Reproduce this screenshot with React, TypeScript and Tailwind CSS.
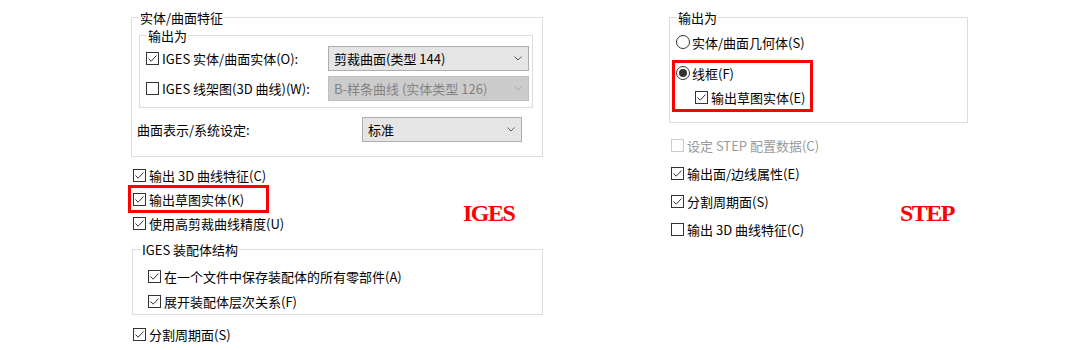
import React from "react";

function Box({ checked = false, disabled = false }: { checked?: boolean; disabled?: boolean }) {
  return (
    <span
      className={`w-[13px] h-[13px] border ${disabled ? "border-[#cccccc]" : "border-[#333333]"} bg-white flex items-center justify-center shrink-0`}
    >
      {checked && (
        <svg width="11" height="11" viewBox="0 0 11 11">
          <path d="M1.5 5.5 L4.2 8.2 L9.5 2.5" fill="none" stroke="#333333" strokeWidth="1" />
        </svg>
      )}
    </span>
  );
}

function Radio({ selected = false }: { selected?: boolean }) {
  return (
    <span className="w-[14px] h-[14px] rounded-full border border-[#333333] bg-white flex items-center justify-center shrink-0">
      {selected && <span className="w-[8px] h-[8px] rounded-full bg-[#333333]" />}
    </span>
  );
}

function Chevron({ color = "#606060" }: { color?: string }) {
  return (
    <svg width="8" height="5" viewBox="0 0 8 5">
      <path d="M0.5 0.5 L4 4 L7.5 0.5" fill="none" stroke={color} strokeWidth="1" />
    </svg>
  );
}

function Select({ text, disabled = false, width }: { text: string; disabled?: boolean; width: string }) {
  return (
    <div
      className={`${width} h-[25px] border flex items-center justify-between pl-[5px] pr-[6px] shrink-0 ${
        disabled ? "bg-[#cccccc] border-[#bfbfbf] text-[#838383]" : "bg-[#e5e5e5] border-[#adadad] text-black"
      }`}
    >
      <span>{text}</span>
      <Chevron color={disabled ? "#a8a8a8" : "#606060"} />
    </div>
  );
}

function CheckRow({
  label,
  checked = true,
  disabled = false,
  className = "",
}: {
  label: string;
  checked?: boolean;
  disabled?: boolean;
  className?: string;
}) {
  return (
    <div className={`flex items-center gap-[3px] ${className}`}>
      <Box checked={checked} disabled={disabled} />
      <span className={disabled ? "text-[#9a9a9a]" : ""}>{label}</span>
    </div>
  );
}

export default function App() {
  return (
    <div
      className="w-[1080px] h-[350px] bg-white flex overflow-hidden text-[13px] leading-[15px] text-black"
      style={{ fontFamily: '"Noto Sans CJK SC", "Noto Sans", sans-serif' }}
    >
      {/* IGES panel */}
      <div className="relative ml-[131px] w-[412px] pt-[10px] flex flex-col shrink-0">
        <fieldset className="border border-[#dcdcdc] pl-[7px] pr-[9px] pt-[3px] pb-[14px]">
          <legend className="px-[1px]">实体/曲面特征</legend>
          <fieldset className="border border-[#dcdcdc] pl-[6px] pr-[3px] pt-[3px] pb-[6px]">
            <legend className="ml-[1px] px-[1px]">输出为</legend>
            <div className="flex items-center justify-between">
              <CheckRow label="IGES 实体/曲面实体(O):" />
              <Select text="剪裁曲面(类型 144)" width="w-[201px]" />
            </div>
            <div className="flex items-center justify-between mt-[5px]">
              <CheckRow label="IGES 线架图(3D 曲线)(W):" checked={false} />
              <Select text="B-样条曲线 (实体类型 126)" width="w-[201px]" disabled />
            </div>
          </fieldset>
          <div className="flex items-center justify-between mt-[9px] mr-[11px]">
            <span className="-ml-[2px]">曲面表示/系统设定:</span>
            <Select text="标准" width="w-[160px]" />
          </div>
        </fieldset>

        <CheckRow label="输出 3D 曲线特征(C)" className="h-[24px] mt-[6px] ml-[2px]" />
        <div className="relative h-[24px] flex items-center ml-[2px]">
          <CheckRow label="输出草图实体(K)" />
          <div className="absolute left-[-5px] top-[-2px] w-[141px] h-[28px] border-[3px] border-[#ff0000]" />
        </div>
        <CheckRow label="使用高剪裁曲线精度(U)" className="h-[24px] ml-[2px]" />

        <fieldset className="border border-[#dcdcdc] mt-[7px] ml-[1px] pl-[8px] pt-[7px]">
          <legend className="px-[1px]">IGES 装配体结构</legend>
          <CheckRow label="在一个文件中保存装配体的所有零部件(A)" className="h-[25px] pl-[7px]" />
          <CheckRow label="展开装配体层次关系(F)" className="h-[25px] pl-[7px]" />
        </fieldset>

        <CheckRow label="分割周期面(S)" className="h-[24px] mt-[7px] ml-[2px]" />

        <div
          className="absolute left-[332px] top-[201px] text-[24px] leading-none font-bold tracking-[-1.5px] text-[#ff0000]"
          style={{ fontFamily: '"Liberation Serif", serif' }}
        >
          IGES
        </div>
      </div>

      {/* STEP panel */}
      <div className="relative ml-[126px] w-[299px] pt-[10px] flex flex-col shrink-0">
        <fieldset className="border border-[#dcdcdc] pl-[6px] pt-[5px] pb-[13px]">
          <legend className="ml-[1px] px-[1px]">输出为</legend>
          <div className="h-[24px] flex items-center gap-[2px]">
            <Radio />
            <span>实体/曲面几何体(S)</span>
          </div>
          <div className="relative mt-[7px]">
            <div className="h-[24px] flex items-center gap-[2px]">
              <Radio selected />
              <span>线框(F)</span>
            </div>
            <CheckRow label="输出草图实体(E)" className="h-[24px] pl-[19px]" />
            <div className="absolute left-[-4px] top-[-1px] w-[141px] h-[52px] border-[3px] border-[#ff0000]" />
          </div>
        </fieldset>

        <CheckRow label="设定 STEP 配置数据(C)" checked={false} disabled className="h-[28px] mt-[8px] ml-[2px]" />
        <CheckRow label="输出面/边线属性(E)" className="h-[28px] ml-[2px]" />
        <CheckRow label="分割周期面(S)" className="h-[28px] ml-[2px]" />
        <CheckRow label="输出 3D 曲线特征(C)" checked={false} className="h-[28px] ml-[2px]" />

        <div
          className="absolute left-[231px] top-[201px] text-[24px] leading-none font-bold tracking-[-1.5px] text-[#ff0000]"
          style={{ fontFamily: '"Liberation Serif", serif' }}
        >
          STEP
        </div>
      </div>
    </div>
  );
}
